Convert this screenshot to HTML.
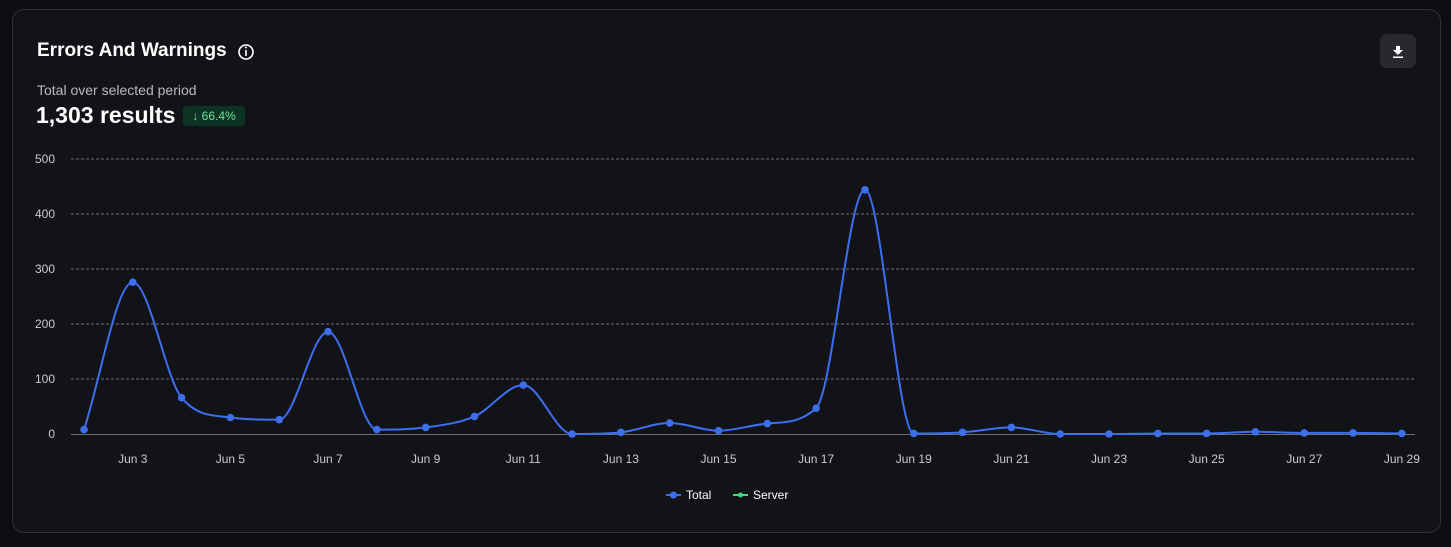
<!DOCTYPE html>
<html><head><meta charset="utf-8"><style>
html,body{margin:0;padding:0;background:#0d0e11;width:1451px;height:547px;overflow:hidden;font-family:"Liberation Sans",sans-serif}
.card{position:absolute;left:12px;top:9px;width:1427px;height:522px;border:1px solid #2e3036;border-radius:12px;background:#111317}
.t{position:absolute;left:37px;top:40px;color:#fff;font-size:19px;font-weight:bold}
.sub{position:absolute;left:37px;top:82px;color:#b8bac0;font-size:14px}
.big{position:absolute;left:36px;top:102px;color:#fff;font-size:23px;font-weight:bold}
.badge{position:absolute;left:183px;top:106px;width:62px;height:20px;background:#0d3322;border-radius:3px;color:#6ee3a0;font-size:12px;line-height:20px;text-align:center}
.btn{position:absolute;left:1380px;top:34px;width:36px;height:34px;background:#27292e;border-radius:7px}
svg{position:absolute;left:0;top:0}
</style></head><body>
<div class="card"></div>
<div class="t">Errors And Warnings</div>
<svg width="1451" height="547" id="s">
<circle cx="246" cy="52" r="7" fill="none" stroke="#fff" stroke-width="1.6"/>
<line x1="246" y1="50" x2="246" y2="56" stroke="#fff" stroke-width="1.6"/>
<circle cx="246" cy="47.5" r="1" fill="#fff"/>
</svg>
<div class="sub">Total over selected period</div>
<div class="big">1,303 results</div>
<div class="badge">↓ 66.4%</div>
<div class="btn"><svg width="36" height="34"><path d="M16 12h4v4h3l-5 5-5-5h3z" fill="#fff"/><rect x="13" y="22.5" width="10" height="1.5" fill="#fff"/></svg></div>
<script>
const s=document.getElementById('s'),NS='http://www.w3.org/2000/svg';
let h='';
[500,400,300,200,100,0].forEach((v,i)=>{const y=159+i*55;
h+=`<text x="55" y="${y+4}" fill="#c8cad0" font-size="12" text-anchor="end" font-family="Liberation Sans">${v}</text>`;
if(v>0)h+=`<line x1="71" y1="${y}" x2="1415" y2="${y}" stroke="#6b6e75" stroke-dasharray="3 2" stroke-width="1"/>`;});
h+=`<line x1="71" y1="434.5" x2="1415" y2="434.5" stroke="#6b6e75"/>`;
const d=[8,276,66,30,26,186,8,12,32,89,0,3,20,6,19,47,444,1,3,12,0,0,1,1,4,2,2,1];
const P=d.map((v,i)=>[84+i*48.81,434-v*0.55]);
for(let i=1;i<28;i+=2)h+=`<text x="${P[i][0]}" y="463" fill="#c8cad0" font-size="12" text-anchor="middle" font-family="Liberation Sans">Jun ${i+2}</text>`;
// monotone cubic
const n=P.length,m=[],dl=[];
for(let i=0;i<n-1;i++)dl.push((P[i+1][1]-P[i][1])/(P[i+1][0]-P[i][0]));
for(let i=0;i<n;i++){if(i==0)m.push(dl[0]);else if(i==n-1)m.push(dl[n-2]);else m.push(dl[i-1]*dl[i]<=0?0:(dl[i-1]+dl[i])/2);}
for(let i=0;i<n-1;i++){if(dl[i]==0){m[i]=0;m[i+1]=0;continue;}const a=m[i]/dl[i],b=m[i+1]/dl[i],t=a*a+b*b;if(t>9){const k=3/Math.sqrt(t);m[i]=k*a*dl[i];m[i+1]=k*b*dl[i];}}
let p=`M${P[0][0]},${P[0][1]}`;
for(let i=0;i<n-1;i++){const hx=(P[i+1][0]-P[i][0])/3;p+=`C${P[i][0]+hx},${P[i][1]+m[i]*hx} ${P[i+1][0]-hx},${P[i+1][1]-m[i+1]*hx} ${P[i+1][0]},${P[i+1][1]}`;}
h+=`<path d="${p}" fill="none" stroke="#3d6ef0" stroke-width="2"/>`;
P.forEach(q=>h+=`<circle cx="${q[0]}" cy="${q[1]}" r="3.8" fill="#3d6ef0"/>`);
h+=`<line x1="666" y1="495" x2="681" y2="495" stroke="#3d6ef0" stroke-width="2"/><circle cx="673.5" cy="495" r="3.5" fill="#3d6ef0"/><text x="686" y="499" fill="#fff" font-size="12" font-family="Liberation Sans">Total</text>`;
h+=`<line x1="733" y1="495" x2="748" y2="495" stroke="#3ddc84" stroke-width="2"/><circle cx="740.5" cy="495" r="2.5" fill="#3ddc84"/><text x="753" y="499" fill="#fff" font-size="12" font-family="Liberation Sans">Server</text>`;
s.insertAdjacentHTML('beforeend',h);
</script>
</body></html>
